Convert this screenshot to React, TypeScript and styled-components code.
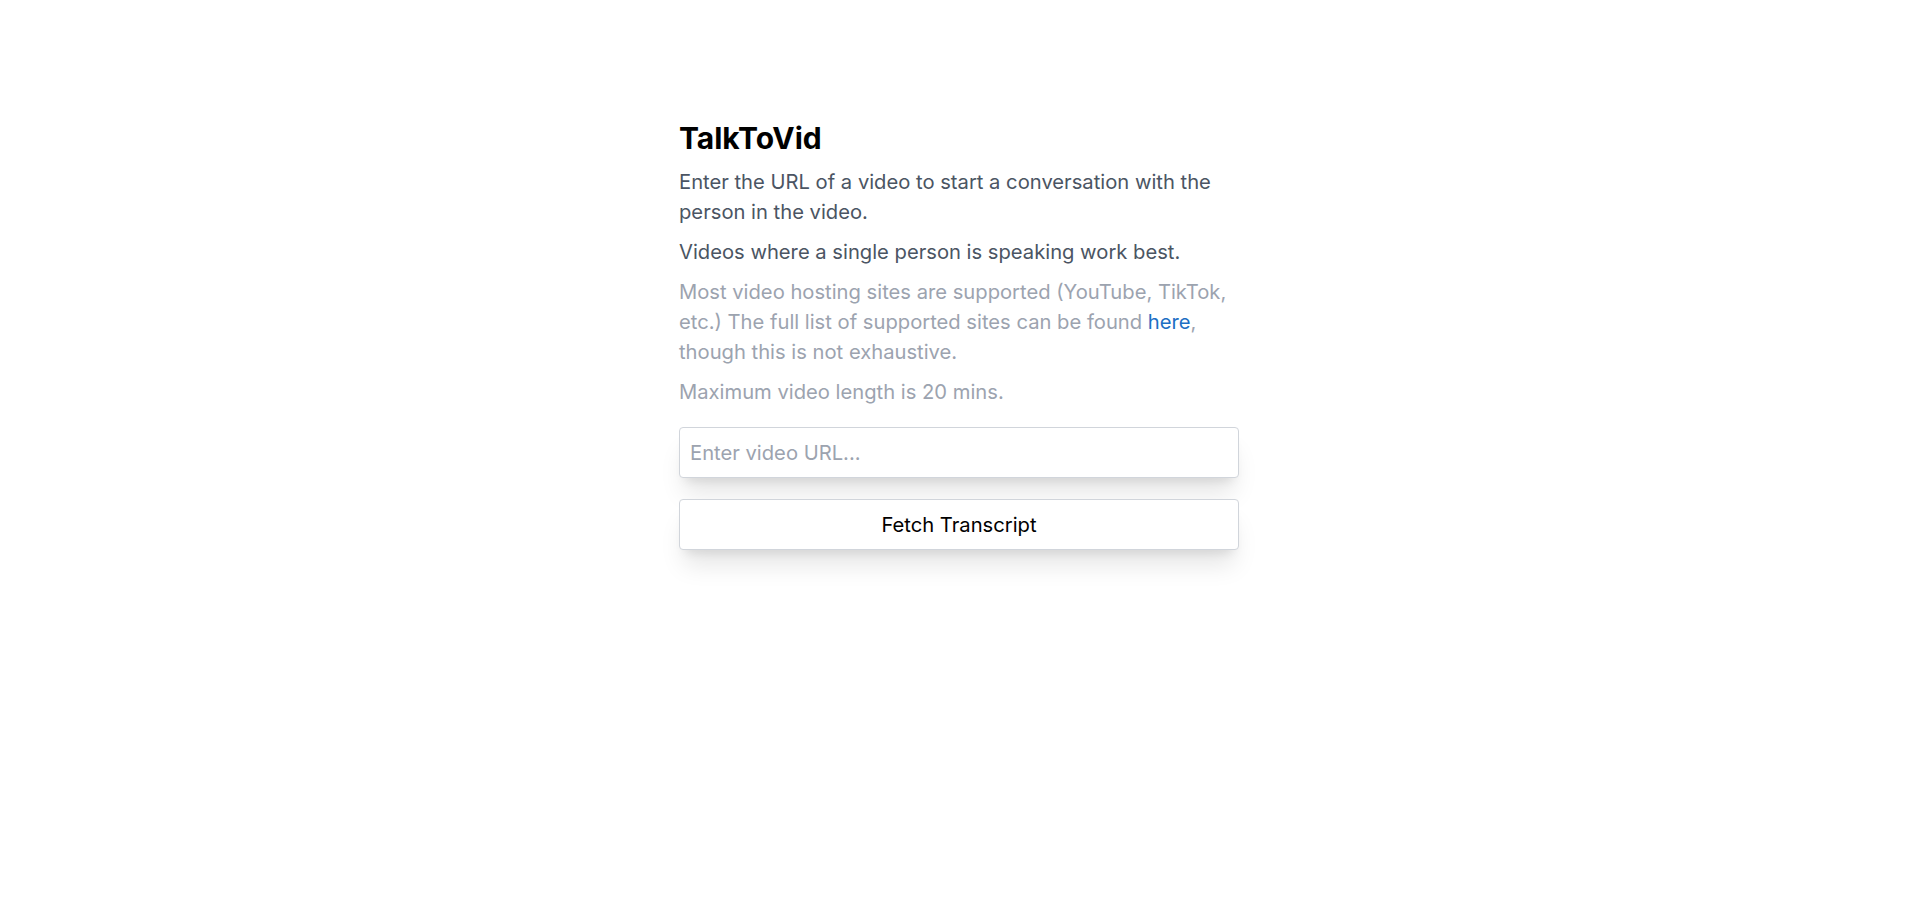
import React from "react";
import styled, { createGlobalStyle } from "styled-components";

const GlobalStyle = createGlobalStyle`
  html, body {
    margin: 0;
    padding: 0;
    background: #ffffff;
  }
  body {
    font-family: Inter, "Noto Sans", sans-serif;
  }
`;

const Page = styled.div`
  min-height: 921px;
  padding-top: 119px;
  padding-left: 679px;
  box-sizing: border-box;
`;

const Main = styled.main`
  width: 560px;
  display: flex;
  flex-direction: column;
`;

const Title = styled.h1`
  margin: 0 0 10px;
  font-size: 30px;
  line-height: 38px;
  font-weight: 700;
  color: #000000;
`;

const Text = styled.p<{ $muted?: boolean }>`
  margin: 0 0 10px;
  font-size: 20.2px;
  line-height: 30px;
  color: ${(p) => (p.$muted ? "#9ca3af" : "#4b5563")};
`;

const Link = styled.a`
  color: #1d6fc4;
  text-decoration: none;
`;

const Form = styled.form`
  margin-top: 10px;
  display: flex;
  flex-direction: column;
  gap: 21px;
`;

const shadow =
  "0 20px 25px -5px rgba(0, 0, 0, 0.1), 0 8px 10px -6px rgba(0, 0, 0, 0.1)";

const UrlInput = styled.input`
  height: 51px;
  box-sizing: border-box;
  padding: 0 10px;
  border: 1px solid #d1d5db;
  border-radius: 4px;
  font-family: Inter, "Noto Sans", sans-serif;
  font-size: 20.2px;
  color: #111827;
  background: #ffffff;
  box-shadow: ${shadow};
  outline: none;

  &::placeholder {
    color: #9ca3af;
  }
`;

const Button = styled.button`
  height: 51px;
  box-sizing: border-box;
  border: 1px solid #d1d5db;
  border-radius: 4px;
  background: #ffffff;
  font-family: Inter, "Noto Sans", sans-serif;
  font-size: 20.2px;
  color: #000000;
  cursor: pointer;
  box-shadow: ${shadow};
`;

const App = () => {
  return (
    <>
      <GlobalStyle />
      <Page>
        <Main>
          <Title>TalkToVid</Title>
          <Text>
            Enter the URL of a video to start a conversation with the person in
            the video.
          </Text>
          <Text>Videos where a single person is speaking work best.</Text>
          <Text $muted>
            Most video hosting sites are supported (YouTube, TikTok, etc.) The
            full list of supported sites can be found <Link href="#">here</Link>,
            though this is not exhaustive.
          </Text>
          <Text $muted>Maximum video length is 20 mins.</Text>
          <Form onSubmit={(e) => e.preventDefault()}>
            <UrlInput type="text" placeholder="Enter video URL..." />
            <Button type="submit">Fetch Transcript</Button>
          </Form>
        </Main>
      </Page>
    </>
  );
};

export default App;
